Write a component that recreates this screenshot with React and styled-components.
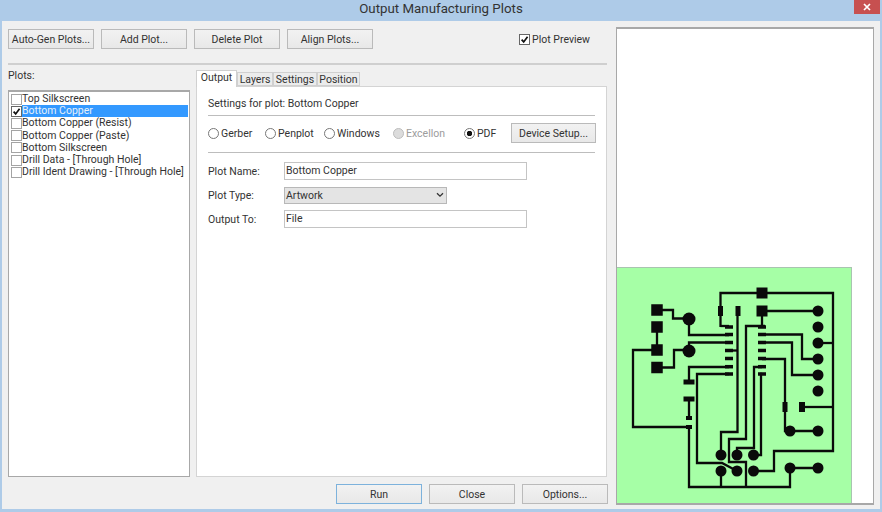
import React from 'react'
import styled, { createGlobalStyle } from 'styled-components'

const plots = [
  { name: 'Top Silkscreen' },
  { name: 'Bottom Copper', checked: true, selected: true },
  { name: 'Bottom Copper (Resist)' },
  { name: 'Bottom Copper (Paste)' },
  { name: 'Bottom Silkscreen' },
  { name: 'Drill Data - [Through Hole]' },
  { name: 'Drill Ident Drawing - [Through Hole]' },
]

const tabs = [
  { label: 'Output', width: 41 },
  { label: 'Layers', width: 36 },
  { label: 'Settings', width: 44 },
  { label: 'Position', width: 43 },
]

const radios = [
  { label: 'Gerber', width: 57 },
  { label: 'Penplot', width: 59 },
  { label: 'Windows', width: 69 },
  { label: 'Excellon', width: 71, disabled: true },
  { label: 'PDF', width: 47, on: true },
]

// board artwork, in page coordinates
const traces = [
  '657,310 673,310 673,318.5 689,318.5',
  '689,319 689,335 729,335',
  '689,351 689,342.5 729,342.5',
  '689,350 674,350 674,367.5 657,367.5',
  '657,327 657,350',
  '657,350 633,350 633,427 689,427',
  '729,367 689,367 689,382',
  '729,374 697,374 697,463 722,463 737,471',
  '689,399 689,418',
  '689,427 689,487 790,487 790,468 818,468',
  '721,471 721,487',
  '721,455 721,432 737.5,432 737.5,311',
  '729,350.5 737.5,350.5',
  '720.5,327 720.5,293 762,293 833,293 833,451 774,451 774,471 754,471',
  '720.5,326 729,326',
  '762,311 818,311',
  '762,311 762,326',
  '765,326 746,326 746,439 729,439 729,462 746,462 746,487',
  '762,334.5 802,334.5 802,359 818,359',
  '762,342.5 792,342.5 792,375 818,375',
  '818,343 833,343',
  '762,359 785,359 785,431 818,431',
  '802,407 833,407',
  '762,367 754,367 754,448 737,448 737,455',
  '762,374 761,374 761,455 754,455',
]

const padRows = [334.5, 342.5, 350.5, 358.5, 366.7, 374]

const smdPads = [
  [657, 310, 11.5, 11.5], [657, 327, 11.5, 11.5], [657, 350, 11.5, 11.5], [657, 367.5, 11.5, 11.5],
  [720.5, 311, 5, 10], [738, 311, 5, 10], [762, 293, 11, 11], [762, 311, 11, 11],
  [689, 382, 11, 5], [689, 399, 11, 5], [689, 418, 6, 4], [689, 427, 6, 4],
  [785, 407, 5, 10], [802, 407, 6, 10],
  [729, 327, 8, 3.5], [762, 327, 8, 3.5],
  ...padRows.flatMap(y => [[729, y, 8, 3.5], [762, y, 8, 3.5]]),
]

const holes = [
  [689, 319, 6.5], [689, 351, 6.5],
  [818, 311, 5.5], [818, 327, 5.5], [818, 343, 5.5], [818, 359, 5.5], [818, 375, 5.5], [818, 391, 5.5],
  [790, 431, 5.5], [818, 431, 5.5], [790, 468, 5.5], [818, 468, 5.5],
  [721, 455, 5.5], [737, 455, 5.5], [753.5, 455, 5.5],
  [721, 471, 5.5], [737, 471, 5.5], [753.5, 471, 5.5],
]

const App = () => (
  <>
    <GlobalStyle />
    <Frame>
      <TitleBar>
        <span />
        <Title>Output Manufacturing Plots</Title>
        <CloseButton>
          <svg width="8" height="8" viewBox="0 0 8 8">
            <path d="M1 1l6 6M7 1L1 7" stroke="#fff" strokeWidth="1.7" />
          </svg>
        </CloseButton>
      </TitleBar>
      <Body>
        <LeftColumn>
          <Toolbar>
            <Button>Auto-Gen Plots...</Button>
            <Button>Add Plot...</Button>
            <Button>Delete Plot</Button>
            <Button>Align Plots...</Button>
            <PreviewToggle>
              <CheckBox $checked>
                <Tick />
              </CheckBox>
              Plot Preview
            </PreviewToggle>
          </Toolbar>
          <ToolbarRule />
          <Main>
            <PlotsColumn>
              <PlotsLabel>Plots:</PlotsLabel>
              <PlotList>
                {plots.map(plot => (
                  <PlotRow key={plot.name}>
                    <CheckBox $checked={plot.checked}>{plot.checked && <Tick />}</CheckBox>
                    <PlotName $selected={plot.selected}>{plot.name}</PlotName>
                  </PlotRow>
                ))}
              </PlotList>
            </PlotsColumn>
            <TabsColumn>
              <TabStrip>
                {tabs.map((tab, i) => (
                  <Tab key={tab.label} $width={tab.width} $active={i === 0}>
                    {tab.label}
                  </Tab>
                ))}
              </TabStrip>
              <TabPanel>
                <Heading>Settings for plot: Bottom Copper</Heading>
                <PanelRule />
                <RadioRow>
                  {radios.map(radio => (
                    <RadioItem key={radio.label} $width={radio.width} $disabled={radio.disabled}>
                      <RadioDot $on={radio.on} $disabled={radio.disabled} />
                      {radio.label}
                    </RadioItem>
                  ))}
                  <DeviceButton>Device Setup...</DeviceButton>
                </RadioRow>
                <PanelRule />
                <Form>
                  <FieldLabel>Plot Name:</FieldLabel>
                  <TextField $width={243}>Bottom Copper</TextField>
                  <FieldLabel>Plot Type:</FieldLabel>
                  <SelectField>
                    Artwork
                    <svg width="8" height="6" viewBox="0 0 8 6">
                      <path d="M1 1.2l3 3 3-3" fill="none" stroke="#333" strokeWidth="1.3" />
                    </svg>
                  </SelectField>
                  <FieldLabel>Output To:</FieldLabel>
                  <TextField $width={243}>File</TextField>
                </Form>
              </TabPanel>
            </TabsColumn>
          </Main>
          <Footer>
            <Button $primary>Run</Button>
            <Button>Close</Button>
            <Button>Options...</Button>
          </Footer>
        </LeftColumn>
        <Preview>
          <Board>
            <svg width="234" height="235" viewBox="617 268 234 235">
              {traces.map(points => (
                <polyline key={points} points={points} fill="none" stroke="#0a0a0a" strokeWidth="2.3" />
              ))}
              {smdPads.map(([x, y, w, h]) => (
                <rect key={`${x}-${y}`} x={x - w / 2} y={y - h / 2} width={w} height={h} fill="#0a0a0a" />
              ))}
              {holes.map(([x, y, r]) => (
                <circle key={`${x}-${y}`} cx={x} cy={y} r={r} fill="#0a0a0a" />
              ))}
            </svg>
          </Board>
        </Preview>
      </Body>
    </Frame>
  </>
)

export default App

const Tick = () => (
  <svg width="9" height="9" viewBox="0 0 10 10">
    <path d="M1.8 5.2l2.3 2.5L8.4 2" fill="none" stroke="#111" strokeWidth="1.9" />
  </svg>
)

const GlobalStyle = createGlobalStyle`
  html,
  body {
    margin: 0;
    padding: 0;
    background: #aecbe8;
  }
  body {
    font-family: Roboto, 'Open Sans', 'Liberation Sans', sans-serif;
    font-size: 10.5px;
    color: #333;
  }
`

const Frame = styled.div`
  width: 882px;
  height: 512px;
  display: flex;
  flex-direction: column;
  overflow: hidden;
  background: #aecbe8;
`

const TitleBar = styled.div`
  height: 21px;
  display: grid;
  grid-template-columns: 1fr auto 1fr;
  align-items: start;
`

const Title = styled.div`
  font-size: 13.3px;
  line-height: 18px;
  color: #333;
`

const CloseButton = styled.div`
  justify-self: end;
  width: 26px;
  height: 14px;
  margin-right: 2px;
  background: #c75050;
  display: flex;
  align-items: center;
  justify-content: center;
`

const Body = styled.div`
  flex: 1;
  margin: 0 2px 3px;
  padding-left: 6px;
  background: #f0f0f0;
  display: flex;
  gap: 8px;
`

const LeftColumn = styled.div`
  width: 600px;
  display: flex;
  flex-direction: column;
`

const Toolbar = styled.div`
  margin-top: 8px;
  height: 20px;
  display: flex;
  align-items: center;
  gap: 7px;
`

const Button = styled.div`
  width: 86px;
  height: 20px;
  box-sizing: border-box;
  display: flex;
  flex: none;
  align-items: center;
  justify-content: center;
  background: linear-gradient(#f2f2f2, #e8e8e8);
  border: 1px solid ${p => (p.$primary ? '#7db2dc' : '#bababa')};
`

const PreviewToggle = styled.div`
  margin-left: auto;
  margin-right: 18px;
  display: flex;
  align-items: center;
  gap: 2px;
`

const CheckBox = styled.div`
  width: 9px;
  height: 9px;
  flex: none;
  background: #fff;
  border: 1px solid ${p => (p.$checked ? '#666' : '#a4a4a4')};
  display: flex;
  align-items: center;
  justify-content: center;
`

const ToolbarRule = styled.div`
  margin: 14px 1px 0 0;
  height: 2px;
  background: #cfcfcf;
`

const Main = styled.div`
  margin: 5px 1px 0 0;
  height: 407px;
  display: flex;
  gap: 6px;
`

const PlotsColumn = styled.div`
  width: 182px;
  flex: none;
  display: flex;
  flex-direction: column;
`

const PlotsLabel = styled.div`
  height: 20px;
  line-height: 11px;
`

const PlotList = styled.div`
  flex: 1;
  box-sizing: border-box;
  background: #fff;
  border: 1px solid #a8a8a8;
  border-top-width: 2px;
  padding: 1px 1px 0 2px;
`

const PlotRow = styled.div`
  height: 12.2px;
  display: flex;
  align-items: center;
`

const PlotName = styled.div`
  flex: 1;
  height: 12.2px;
  line-height: 12px;
  white-space: nowrap;
  background: ${p => (p.$selected ? '#3399ff' : 'transparent')};
  color: ${p => (p.$selected ? '#e6f0fa' : 'inherit')};
`

const TabsColumn = styled.div`
  flex: 1;
  min-width: 0;
  display: flex;
  flex-direction: column;
`

const TabStrip = styled.div`
  height: 16px;
  display: flex;
  align-items: flex-end;
  position: relative;
  z-index: 1;
`

const Tab = styled.div`
  box-sizing: border-box;
  width: ${p => p.$width}px;
  height: ${p => (p.$active ? '17px' : '14px')};
  margin-bottom: ${p => (p.$active ? '-1px' : '0')};
  padding-bottom: ${p => (p.$active ? '3px' : '0')};
  display: flex;
  align-items: center;
  justify-content: center;
  background: ${p => (p.$active ? '#fff' : '#ececec')};
  border: 1px solid #d0d0d0;
  border-bottom: ${p => (p.$active ? 'none' : '1px solid #d0d0d0')};
`

const TabPanel = styled.div`
  flex: 1;
  box-sizing: border-box;
  background: #fff;
  border: 1px solid #d4d4d4;
  padding: 10px 11px 0;
`

const Heading = styled.div`
  height: 14px;
  line-height: 14px;
  margin-bottom: 4px;
`

const PanelRule = styled.div`
  height: 1px;
  width: 387px;
  background: #bdbdbd;
`

const RadioRow = styled.div`
  height: 36px;
  box-sizing: border-box;
  padding-bottom: 2px;
  display: flex;
  align-items: center;
`

const RadioItem = styled.div`
  width: ${p => p.$width}px;
  flex: none;
  display: flex;
  align-items: center;
  gap: 2px;
  color: ${p => (p.$disabled ? '#9c9c9c' : 'inherit')};
`

const RadioDot = styled.div`
  box-sizing: border-box;
  width: 11px;
  height: 11px;
  border-radius: 50%;
  border: 1px solid ${p => (p.$disabled ? '#bdbdbd' : '#777')};
  background: ${p => {
    if (p.$on) return 'radial-gradient(circle, #111 0 2.5px, #fff 3px)'
    return p.$disabled ? '#dcdcdc' : '#fff'
  }};
`

const DeviceButton = styled(Button)`
  width: 85px;
`

const Form = styled.div`
  margin-top: 9px;
  display: grid;
  grid-template-columns: 76px auto;
  justify-content: start;
  align-items: center;
  row-gap: 6.5px;
`

const FieldLabel = styled.div``

const TextField = styled.div`
  box-sizing: border-box;
  width: ${p => p.$width}px;
  height: 18px;
  padding-left: 1px;
  line-height: 16px;
  background: #fff;
  border: 1px solid #c4c4c4;
`

const SelectField = styled.div`
  box-sizing: border-box;
  width: 163px;
  height: 17px;
  padding: 0 2px 0 1px;
  display: flex;
  align-items: center;
  justify-content: space-between;
  background: #e4e4e4;
  border: 1px solid #b8b8b8;
`

const Footer = styled.div`
  margin-top: 7px;
  display: flex;
  justify-content: flex-end;
  gap: 7px;
`

const Preview = styled.div`
  width: 258px;
  height: 478px;
  margin-top: 6px;
  box-sizing: border-box;
  background: #fff;
  border: 1px solid #a8a8a8;
  border-top-width: 2px;
  border-bottom-width: 2px;
  display: flex;
  flex-direction: column;
  justify-content: flex-end;
`

const Board = styled.div`
  width: 235px;
  height: 236px;
  box-sizing: border-box;
  background: #a6ffa6;
  border-top: 1px solid #a9c4b0;
  border-right: 1px solid #a9c4b0;

  svg {
    display: block;
  }
`
